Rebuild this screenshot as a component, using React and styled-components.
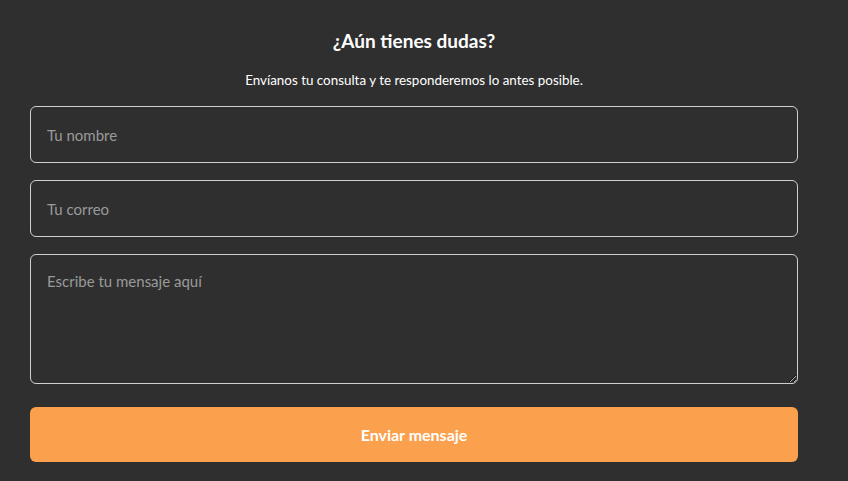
import styled, { createGlobalStyle } from 'styled-components';

const GlobalStyle = createGlobalStyle`
  html, body {
    margin: 0;
    padding: 0;
    background-color: #2f2f2f;
  }
  body {
    font-family: 'Lato', 'Noto Sans', sans-serif;
  }
`;

const Section = styled.section`
  width: 768px;
  padding: 28px 0 19px 30px;
  color: #ffffff;
`;

const Title = styled.h2`
  margin: 0;
  text-align: center;
  font-size: 19px;
  font-weight: 700;
  line-height: 26px;
`;

const Subtitle = styled.p`
  margin: 17px 0 17px;
  text-align: center;
  font-size: 13.4px;
  line-height: 18px;
`;

const Form = styled.form`
  display: flex;
  flex-direction: column;
  gap: 17px;
`;

const fieldStyles = `
  box-sizing: border-box;
  width: 100%;
  background: transparent;
  border: 1px solid #cfcfcf;
  border-radius: 6px;
  color: #ffffff;
  font-family: 'Lato', 'Noto Sans', sans-serif;
  font-size: 15px;
  padding: 0 16px;
  outline: none;

  &::placeholder {
    color: #9a9a9a;
  }
`;

const Input = styled.input`
  ${fieldStyles}
  height: 57px;
`;

const TextArea = styled.textarea`
  ${fieldStyles}
  height: 130px;
  padding-top: 17px;
  resize: vertical;
  display: block;
`;

const SubmitButton = styled.button`
  margin-top: 6px;
  height: 55px;
  border: none;
  border-radius: 6px;
  background-color: #fba04c;
  color: #ffffff;
  font-family: 'Lato', 'Noto Sans', sans-serif;
  font-size: 16px;
  font-weight: 700;
  cursor: pointer;
`;

export default function App() {
  return (
    <>
      <GlobalStyle />
      <Section>
        <Title>¿Aún tienes dudas?</Title>
        <Subtitle>Envíanos tu consulta y te responderemos lo antes posible.</Subtitle>
        <Form onSubmit={e => e.preventDefault()}>
          <Input type="text" placeholder="Tu nombre" />
          <Input type="email" placeholder="Tu correo" />
          <TextArea placeholder="Escribe tu mensaje aquí" />
          <SubmitButton type="submit">Enviar mensaje</SubmitButton>
        </Form>
      </Section>
    </>
  );
}
